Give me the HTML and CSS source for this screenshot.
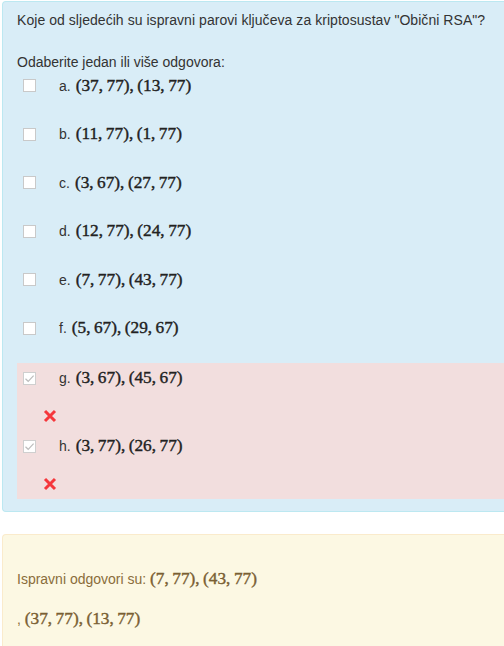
FILE: index.html
```html
<!DOCTYPE html>
<html>
<head>
<meta charset="utf-8">
<link rel="stylesheet" href="styles.css">
</head>
<body>
<div class="que">
  <div class="qtext">Koje od sljedećih su ispravni parovi ključeva za kriptosustav "Obični RSA"?</div>
  <div class="prompt">Odaberite jedan ili više odgovora:</div>
  <div class="answers">
    <div class="answer"><span class="cb"></span><span class="lbl">a.</span><span class="math">(37,&thinsp;77),&thinsp;(13,&thinsp;77)</span></div>
    <div class="answer"><span class="cb"></span><span class="lbl">b.</span><span class="math">(11,&thinsp;77),&thinsp;(1,&thinsp;77)</span></div>
    <div class="answer"><span class="cb"></span><span class="lbl">c.</span><span class="math">(3,&thinsp;67),&thinsp;(27,&thinsp;77)</span></div>
    <div class="answer"><span class="cb"></span><span class="lbl">d.</span><span class="math">(12,&thinsp;77),&thinsp;(24,&thinsp;77)</span></div>
    <div class="answer"><span class="cb"></span><span class="lbl">e.</span><span class="math">(7,&thinsp;77),&thinsp;(43,&thinsp;77)</span></div>
    <div class="answer"><span class="cb"></span><span class="lbl">f.</span><span class="math">(5,&thinsp;67),&thinsp;(29,&thinsp;67)</span></div>
    <div class="answer incorrect">
      <div class="row"><span class="cb checked"><svg viewBox="0 0 13 13" width="13" height="13"><path d="M2.5 6.8 L5.2 9.3 L10.6 3.6" fill="none" stroke="#bdbdbd" stroke-width="1.2"/></svg></span><span class="lbl">g.</span><span class="math">(3,&thinsp;67),&thinsp;(45,&thinsp;67)</span></div>
      <div class="mark"><svg viewBox="0 0 14 14" width="14" height="14"><path d="M2 2 L12 12 M12 2 L2 12" stroke="#f5373c" stroke-width="3" stroke-linecap="butt"/></svg></div>
    </div>
    <div class="answer incorrect">
      <div class="row"><span class="cb checked"><svg viewBox="0 0 13 13" width="13" height="13"><path d="M2.5 6.8 L5.2 9.3 L10.6 3.6" fill="none" stroke="#bdbdbd" stroke-width="1.2"/></svg></span><span class="lbl">h.</span><span class="math">(3,&thinsp;77),&thinsp;(26,&thinsp;77)</span></div>
      <div class="mark"><svg viewBox="0 0 14 14" width="14" height="14"><path d="M2 2 L12 12 M12 2 L2 12" stroke="#f5373c" stroke-width="3" stroke-linecap="butt"/></svg></div>
    </div>
  </div>
</div>
<div class="outcome">
  <div class="line1">Ispravni odgovori su: <span class="math">(7,&thinsp;77),&thinsp;(43,&thinsp;77)</span></div>
  <div class="line2">, <span class="math">(37,&thinsp;77),&thinsp;(13,&thinsp;77)</span></div>
</div>
</body>
</html>
```
FILE: styles.css
```css
html, body {
  margin: 0;
  padding: 0;
  background: #fff;
  overflow: hidden;
}
body {
  font-family: "Liberation Sans", Arial, sans-serif;
  font-size: 14px;
  color: #333;
  width: 504px;
}
.que {
  margin: 1px 0 0 2px;
  width: 502px;
  box-sizing: border-box;
  background: #d9edf7;
  border: 1px solid #bce8f1;
  border-right: none;
  border-radius: 4px 0 0 4px;
  padding: 8px 0 12px 14px;
}
.qtext {
  line-height: 20px;
  letter-spacing: 0.05px;
}
.prompt {
  line-height: 20px;
  margin-top: 22px;
}
.answer {
  display: flex;
  align-items: center;
  height: 24px;
  padding: 1.5px 0 23px 0;
}
.answer.incorrect {
  display: block;
  height: auto;
  background: #f2dede;
  padding: 3px 0 3px 0;
}
.row {
  display: flex;
  align-items: center;
  height: 24px;
}
.mark {
  height: 24px;
  margin-top: 14px;
  padding-left: 26px;
  display: flex;
  align-items: center;
}
.mark svg {
  display: block;
}
.cb {
  display: inline-block;
  box-sizing: border-box;
  width: 13px;
  height: 13px;
  margin-left: 6px;
  margin-right: 23px;
  background: #fff;
  border: 1px solid #c9c9c9;
  flex: none;
  position: relative;
}
.cb.checked {
  border-color: #cfcfcf;
}
.cb.checked svg {
  position: absolute;
  left: -1px;
  top: -1px;
}
.lbl {
  margin-right: 5px;
}
.math {
  font-family: "Liberation Serif", "Times New Roman", serif;
  font-size: 17.3px;
  color: #222;
  -webkit-text-stroke: 0.4px #222;
}
.outcome {
  margin: 22px 0 0 2px;
  width: 502px;
  box-sizing: border-box;
  background: #fcf8e3;
  border: 1px solid #faebcc;
  border-right: none;
  border-radius: 4px 0 0 4px;
  padding: 32px 0 20px 14px;
  color: #8a6d3b;
}
.outcome .math {
  color: #7a5f33;
  -webkit-text-stroke: 0.4px #7a5f33;
}
.line1, .line2 {
  line-height: 24px;
}
.line2 {
  margin-top: 16px;
}
```
